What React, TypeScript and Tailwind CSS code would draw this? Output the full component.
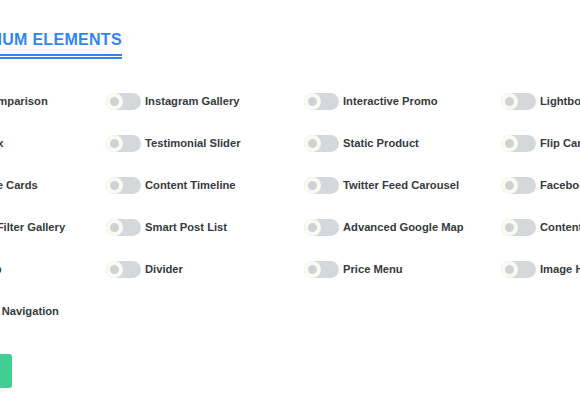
import React from "react";

const ROWS: string[][] = [
  ["Image Comparison", "Instagram Gallery", "Interactive Promo", "Lightbox & Modal"],
  ["Image Box", "Testimonial Slider", "Static Product", "Flip Carousel"],
  ["Interactive Cards", "Content Timeline", "Twitter Feed Carousel", "Facebook Feed Carousel"],
  ["Dynamic Filter Gallery", "Smart Post List", "Advanced Google Map", "Content Ticker"],
  ["Mailchimp", "Divider", "Price Menu", "Image Hotspots"],
  ["One Page Navigation"],
];

const Toggle: React.FC = () => (
  <div className="w-[35px] h-[17px] rounded-full bg-[#d5d8db] flex items-center shrink-0">
    <div className="w-[17px] h-[17px] rounded-full bg-[#cfd2d5] border-[4px] border-[#f9faf1]" />
  </div>
);

const App: React.FC = () => {
  return (
    <div className="w-[580px] h-[400px] overflow-hidden bg-white font-['Liberation_Sans',Arial,sans-serif]">
      <div className="-ml-[92px] pt-[28px]">
        {/* Heading */}
        <div className="ml-[42px] inline-block border-b-[5px] border-double border-[#3284f5] pb-[4px]">
          <h2 className="text-[16px] leading-[20px] font-bold tracking-[0.3px] text-[#3284f5]">PREMIUM ELEMENTS</h2>
        </div>

        {/* Elements grid */}
        <div className="mt-[21px] grid grid-cols-[198px_198px_197px_198px]">
          {ROWS.flat().map((name) => (
            <div key={name} className="h-[42px] flex items-center gap-[4px]">
              <Toggle />
              <span className="text-[11.2px] font-bold text-[#353a40] whitespace-nowrap">{name}</span>
            </div>
          ))}
        </div>

        <button className="mt-[22px] h-[34px] w-[104px] rounded-[3px] bg-[#43cd93] text-white text-[13px] font-bold">
          Save
        </button>
      </div>
    </div>
  );
};

export default App;
